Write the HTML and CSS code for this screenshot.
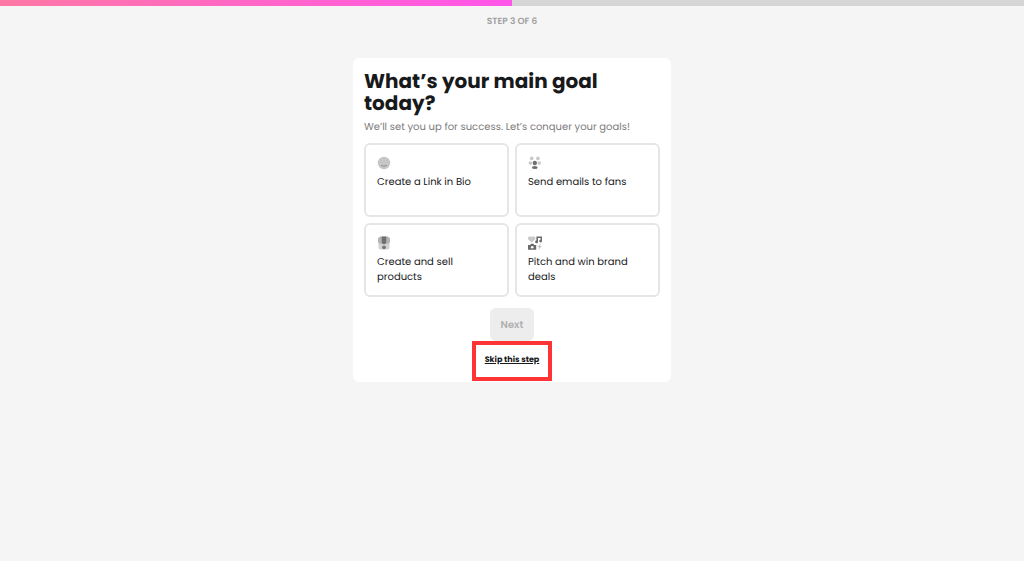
FILE: index.html
```html
<!DOCTYPE html>
<html lang="en">
<head>
    <meta charset="UTF-8">
    <meta name="viewport" content="width=device-width, initial-scale=1.0">
    <title>What’s your main goal today?</title>
    <link rel="stylesheet" href="styles.css">
</head>
<body>
    <div class="progress">
        <div class="progress-bar" style="width: 50%"></div>
    </div>
    <p class="step">STEP 3 OF 6</p>

    <main class="card">
        <h1>What’s your main goal today?</h1>
        <p class="subtitle">We’ll set you up for success. Let’s conquer your goals!</p>

        <div class="goals">
            <button type="button" class="goal">
                <svg viewBox="0 0 14 14" aria-hidden="true">
                    <circle cx="7" cy="7" r="6.2" fill="#c6c6c6"/>
                    <path d="M4 9.5h1.2l1 .6h1.6l1-.6H10" fill="none" stroke="#888" stroke-width="0.9"/>
                </svg>
                <span>Create a Link in Bio</span>
            </button>
            <button type="button" class="goal">
                <svg viewBox="0 0 14 14" aria-hidden="true">
                    <g fill="#c8c8c8">
                        <circle cx="3.7" cy="2.4" r="1.8"/>
                        <circle cx="9.9" cy="2.4" r="1.8"/>
                        <circle cx="2.4" cy="7.1" r="1.8"/>
                        <circle cx="11.2" cy="7.1" r="1.8"/>
                    </g>
                    <circle cx="6.8" cy="7" r="2.2" fill="#707070"/>
                    <ellipse cx="6.8" cy="11.5" rx="2.9" ry="1.6" fill="#707070"/>
                </svg>
                <span>Send emails to fans</span>
            </button>
            <button type="button" class="goal">
                <svg viewBox="0 0 14 14" aria-hidden="true">
                    <rect x="1.5" y="6" width="11" height="7.5" rx="2" fill="#d2d2d2"/>
                    <path d="M3 .5h8l2 1.8V6a2 2 0 0 1-3 1.5H4A2 2 0 0 1 1 6V2.3z" fill="#b5b5b5"/>
                    <path d="M4.7 .5h4.6V6a2.3 2.3 0 0 1-4.6 0z" fill="#707070"/>
                    <circle cx="7" cy="11.3" r="1.9" fill="#777"/>
                </svg>
                <span>Create and sell products</span>
            </button>
            <button type="button" class="goal">
                <svg viewBox="0 0 14 14" aria-hidden="true">
                    <path d="M3.7 6.5L.3 3.6A1.9 1.9 0 0 1 3.7 1.300 1.9 1.9 0 0 1 7 3.6z" fill="#c8c8c8"/>
                    <path d="M9.2 5.6V1.2h4.1v3.6" fill="none" stroke="#6a6a6a" stroke-width="1.6"/>
                    <circle cx="8.6" cy="5.8" r="1.5" fill="#6a6a6a"/>
                    <circle cx="12.600" cy="5.1" r="1.4" fill="#6a6a6a"/>
                    <path d="M0 9.1h2.2l.7-1.300h2.600l.7 1.300h2v4.700H0z" fill="#6a6a6a"/>
                    <circle cx="4.2" cy="11.3" r="1.3" fill="#fff"/>
                    <path d="M12.7 7.500L9.300 11.100h1.800L10.400 14l3.500-4h-1.900z" fill="#c4c4c4"/>
                </svg>
                <span>Pitch and win brand deals</span>
            </button>
        </div>

        <div class="actions">
            <button type="button" class="next" disabled>Next</button>
            <div class="highlight">
                <a href="#" class="skip">Skip this step</a>
            </div>
        </div>
    </main>
</body>
</html>
```

FILE: styles.css
```css
* {
    box-sizing: border-box;
}

body {
    margin: 0;
    background: #f5f5f5;
    color: #18191b;
    font-family: Poppins, Inter, sans-serif;
    text-rendering: geometricPrecision;
}

.progress {
    height: 6px;
    background: #d6d6d6;
}

.progress-bar {
    height: 100%;
    background: linear-gradient(90deg, #ff78a4, #ff55ea);
}

.step {
    margin: 10px 0 0;
    color: #a0a0a0;
    font-size: 9px;
    font-weight: 600;
    line-height: 12px;
    text-align: center;
}

.card {
    width: 100%;
    max-width: 318px;
    margin: 30px auto 0;
    padding: 12px 11px 1px;
    border-radius: 6px;
    background: #fff;
}

h1 {
    margin: 0;
    font-size: 20px;
    font-weight: 700;
    line-height: 22px;
}

.subtitle {
    margin: 5px 0 9px;
    color: #7c7c7c;
    font-size: 10px;
    line-height: 15px;
}

.goals {
    display: grid;
    grid-template-columns: 1fr 1fr;
    gap: 6px;
}

.goal {
    display: flex;
    flex-direction: column;
    align-items: flex-start;
    gap: 4px;
    min-height: 74px;
    padding: 11px;
    border: 2px solid #e6e6e6;
    border-radius: 6px;
    background: #fff;
    color: #18191b;
    font-family: inherit;
    font-size: 10px;
    line-height: 15px;
    text-align: left;
    text-rendering: inherit;
}

.goal svg {
    width: 14px;
    height: 14px;
}

.actions {
    display: flex;
    flex-direction: column;
    align-items: center;
    margin-top: 11px;
}

.next {
    height: 33px;
    padding: 0 11px;
    border: 0;
    border-radius: 6px;
    background: #ededed;
    color: #b0b0b0;
    font-family: inherit;
    font-size: 10px;
    font-weight: 600;
    text-rendering: inherit;
}

/* red frame around the skip link */
.highlight {
    padding: 8px 9px;
    border: 4px solid #ff3434;
}

.skip {
    display: block;
    padding: 1px 0 3px;
    color: #18191b;
    font-size: 8px;
    font-weight: 700;
    line-height: 12px;
    text-decoration: underline;
}
```
